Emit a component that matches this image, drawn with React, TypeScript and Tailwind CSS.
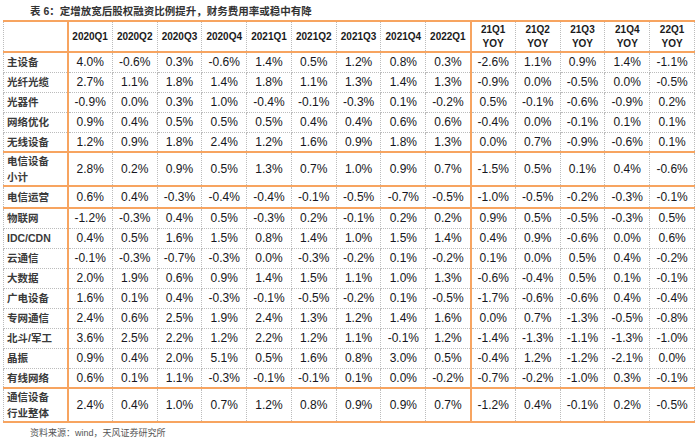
import React from 'react';

const QUARTERS = ['2020Q1', '2020Q2', '2020Q3', '2020Q4', '2021Q1', '2021Q2', '2021Q3', '2021Q4', '2022Q1'];
const YOY = ['21Q1', '21Q2', '21Q3', '21Q4', '22Q1'];

type Row = { label: string[]; values: string[]; orangeBottom?: boolean; h: string };

const rows: Row[] = [
  { label: ['主设备'], h: 'h-[20px]', values: ['4.0%', '-0.6%', '0.3%', '-0.6%', '1.4%', '0.5%', '1.2%', '0.8%', '0.3%', '-2.6%', '1.1%', '0.9%', '1.4%', '-1.1%'] },
  { label: ['光纤光缆'], h: 'h-[20px]', values: ['2.7%', '1.1%', '1.8%', '1.4%', '1.8%', '1.1%', '1.3%', '1.4%', '1.3%', '-0.9%', '0.0%', '-0.5%', '0.0%', '-0.5%'] },
  { label: ['光器件'], h: 'h-[20px]', values: ['-0.9%', '0.0%', '0.3%', '1.0%', '-0.4%', '-0.1%', '-0.3%', '0.1%', '-0.2%', '0.5%', '-0.1%', '-0.6%', '-0.9%', '0.2%'] },
  { label: ['网络优化'], h: 'h-[20px]', values: ['0.9%', '0.4%', '0.5%', '0.5%', '0.5%', '0.4%', '0.4%', '0.6%', '0.6%', '-0.4%', '0.0%', '-0.1%', '0.1%', '0.1%'] },
  { label: ['无线设备'], h: 'h-[20px]', orangeBottom: true, values: ['1.2%', '0.9%', '1.8%', '2.4%', '1.2%', '1.6%', '0.9%', '1.8%', '1.3%', '0.0%', '0.7%', '-0.9%', '-0.6%', '0.1%'] },
  { label: ['电信设备', '小计'], h: 'h-[32px]', orangeBottom: true, values: ['2.8%', '0.2%', '0.9%', '0.5%', '1.3%', '0.7%', '1.0%', '0.9%', '0.7%', '-1.5%', '0.5%', '0.1%', '0.4%', '-0.6%'] },
  { label: ['电信运营'], h: 'h-[22px]', orangeBottom: true, values: ['0.6%', '0.4%', '-0.3%', '-0.4%', '-0.4%', '-0.1%', '-0.5%', '-0.7%', '-0.5%', '-1.0%', '-0.5%', '-0.2%', '-0.3%', '-0.1%'] },
  { label: ['物联网'], h: 'h-[20px]', values: ['-1.2%', '-0.3%', '0.4%', '0.5%', '-0.3%', '0.2%', '-0.1%', '0.2%', '0.2%', '0.9%', '0.5%', '-0.5%', '-0.3%', '0.5%'] },
  { label: ['IDC/CDN'], h: 'h-[20px]', values: ['0.4%', '0.5%', '1.6%', '1.5%', '0.8%', '1.4%', '1.0%', '1.5%', '1.4%', '0.4%', '0.9%', '-0.6%', '0.0%', '0.6%'] },
  { label: ['云通信'], h: 'h-[20px]', values: ['-0.1%', '-0.3%', '-0.7%', '-0.3%', '0.0%', '-0.3%', '-0.2%', '0.1%', '-0.2%', '0.1%', '0.0%', '0.5%', '0.4%', '-0.2%'] },
  { label: ['大数据'], h: 'h-[20px]', values: ['2.0%', '1.9%', '0.6%', '0.9%', '1.4%', '1.5%', '1.1%', '1.0%', '1.3%', '-0.6%', '-0.4%', '0.5%', '0.1%', '-0.1%'] },
  { label: ['广电设备'], h: 'h-[20px]', values: ['1.6%', '0.1%', '0.4%', '-0.3%', '-0.1%', '-0.5%', '-0.2%', '0.1%', '-0.5%', '-1.7%', '-0.6%', '-0.6%', '0.4%', '-0.4%'] },
  { label: ['专网通信'], h: 'h-[20px]', values: ['2.4%', '0.6%', '2.5%', '1.9%', '2.4%', '1.3%', '1.2%', '1.4%', '1.6%', '0.0%', '0.7%', '-1.3%', '-0.5%', '-0.8%'] },
  { label: ['北斗/军工'], h: 'h-[20px]', values: ['3.6%', '2.5%', '2.2%', '1.2%', '2.2%', '1.2%', '1.1%', '-0.1%', '1.2%', '-1.4%', '-1.3%', '-1.1%', '-1.3%', '-1.0%'] },
  { label: ['晶振'], h: 'h-[20px]', values: ['0.9%', '0.4%', '2.0%', '5.1%', '0.5%', '1.6%', '0.8%', '3.0%', '0.5%', '-0.4%', '1.2%', '-1.2%', '-2.1%', '0.0%'] },
  { label: ['有线网络'], h: 'h-[20px]', orangeBottom: true, values: ['0.6%', '0.1%', '1.1%', '-0.3%', '-0.1%', '-0.1%', '0.1%', '0.0%', '-0.2%', '-0.7%', '-0.2%', '-1.0%', '0.3%', '-0.1%'] },
  { label: ['通信设备', '行业整体'], h: 'h-[32px]', orangeBottom: true, values: ['2.4%', '0.4%', '1.0%', '0.7%', '1.2%', '0.8%', '0.9%', '0.9%', '0.7%', '-1.2%', '0.4%', '-0.1%', '0.2%', '-0.5%'] },
];

// Arial-width latin first, CJK fallback after
const font = "font-['Liberation_Sans','Noto_Sans_CJK_SC',sans-serif]";

export default function App() {
  return (
    <div className={`w-[700px] h-[440px] bg-white ${font}`}>
      <div className="h-[20px] pl-[30px] pt-[4px] text-[10.5px] font-bold leading-[14px] text-[#333]">
        表 6：定增放宽后股权融资比例提升，财务费用率或稳中有降
      </div>

      <table className="ml-[3px] w-[692px] table-fixed border-collapse">
        <colgroup>
          <col className="w-[64px] border-r-2 border-[#f7a460]" />
          {QUARTERS.map((q, i) => (
            <col key={q} className={i === QUARTERS.length - 1 ? 'border-r-2 border-[#f7a460]' : ''} />
          ))}
          {YOY.map((q) => (
            <col key={q} />
          ))}
        </colgroup>
        <thead>
          <tr className="h-[31px] border-t-2 border-b-2 border-[#f7a460]">
            <th className="border border-dotted border-[#bcbcbc]" />
            {QUARTERS.map((q) => (
              <th key={q} className="border border-dotted border-[#bcbcbc] text-center text-[10px] font-bold text-[#1a1a1a]">
                {q}
              </th>
            ))}
            {YOY.map((q) => (
              <th key={q} className="border border-dotted border-[#bcbcbc] text-center text-[10px] font-bold leading-[14px] text-[#1a1a1a]">
                {q}
                <br />
                YOY
              </th>
            ))}
          </tr>
        </thead>
        <tbody>
          {rows.map((r) => (
            <tr key={r.label.join('')} className={`${r.h} ${r.orangeBottom ? 'border-b-2 border-[#f7a460]' : ''}`}>
              <td className="border border-dotted border-[#bcbcbc] pl-[3px] text-left text-[10.5px] font-bold leading-[16px] text-[#3a3a3a]">
                {r.label.map((l) => (
                  <div key={l}>{l}</div>
                ))}
              </td>
              {r.values.map((v, i) => (
                <td key={i} className="border border-dotted border-[#bcbcbc] text-center text-[12px] text-[#161620]">
                  {v}
                </td>
              ))}
            </tr>
          ))}
        </tbody>
      </table>

      <div className="pl-[30px] pt-[4px] text-[9px] leading-[12px] text-[#555]">资料来源：wind，天风证券研究所</div>
    </div>
  );
}
